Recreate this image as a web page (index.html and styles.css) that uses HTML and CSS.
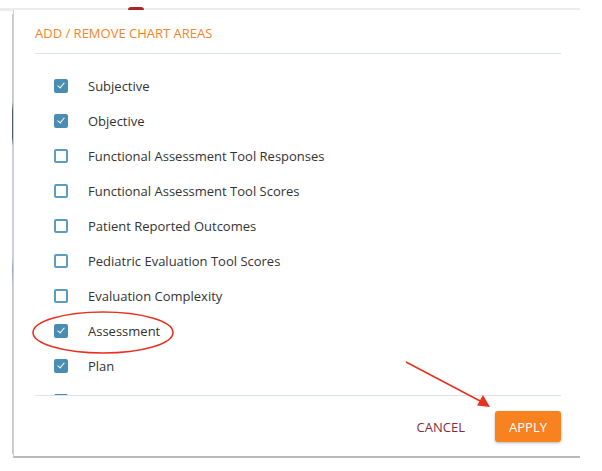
FILE: index.html
```html
<!DOCTYPE html>
<html>
<head>
<meta charset="utf-8">
<link rel="stylesheet" href="styles.css">
</head>
<body>
<div class="page">
  <div class="backdrop-top"><span class="red-tab"></span></div>
  <div class="backdrop-left"></div>
  <div class="modal">
    <div class="modal-header">
      <h2 class="title">ADD / REMOVE CHART AREAS</h2>
    </div>
    <div class="list">
      <label class="row"><span class="cb checked"></span><span class="lbl">Subjective</span></label>
      <label class="row"><span class="cb checked"></span><span class="lbl">Objective</span></label>
      <label class="row"><span class="cb"></span><span class="lbl">Functional Assessment Tool Responses</span></label>
      <label class="row"><span class="cb"></span><span class="lbl">Functional Assessment Tool Scores</span></label>
      <label class="row"><span class="cb"></span><span class="lbl">Patient Reported Outcomes</span></label>
      <label class="row"><span class="cb"></span><span class="lbl">Pediatric Evaluation Tool Scores</span></label>
      <label class="row"><span class="cb"></span><span class="lbl">Evaluation Complexity</span></label>
      <label class="row"><span class="cb checked"></span><span class="lbl">Assessment</span></label>
      <label class="row"><span class="cb checked"></span><span class="lbl">Plan</span></label>
      <label class="row"><span class="cb checked"></span><span class="lbl">Procedures</span></label>
    </div>
    <div class="modal-footer">
      <button class="btn-cancel">CANCEL</button>
      <button class="btn-apply">APPLY</button>
    </div>
  </div>
  <svg class="annot" width="602" height="471" viewBox="0 0 602 471">
    <ellipse cx="103" cy="332.5" rx="70" ry="20.5" fill="none" stroke="#e8321f" stroke-width="1.6"/>
    <line x1="406" y1="362" x2="482" y2="402" stroke="#e8321f" stroke-width="1.6"/>
    <polygon points="490,407 477,405.5 483,395" fill="#e8321f"/>
  </svg>
</div>
</body>
</html>
```
FILE: styles.css
```css
html, body {
  margin: 0;
  padding: 0;
  background: #ffffff;
}
.page {
  position: relative;
  width: 602px;
  height: 471px;
  overflow: hidden;
  font-family: "Open Sans", "DejaVu Sans", sans-serif;
  padding-top: 8px;
  box-sizing: border-box;
}
.backdrop-top {
  position: absolute;
  left: 0;
  top: 8px;
  width: 580px;
  height: 3px;
  background: #ececec;
}
.red-tab {
  position: absolute;
  left: 128px;
  top: -1px;
  width: 16px;
  height: 3px;
  border-radius: 3px 3px 0 0;
  background: #a8262b;
}
.backdrop-left {
  position: absolute;
  left: 12px;
  top: 14px;
  width: 2px;
  height: 440px;
  background: linear-gradient(#c9c9c9, #c9c9c9 20%, #4a5a6e 22%, #4a5a6e 28%, #cfd3da 30%, #cfd3da 55%, #98a6c4 58%, #c9c9c9 62%);
}
.modal {
  position: relative;
  margin-left: 13px;
  margin-top: 2px;
  width: 567px;
  height: 448px;
  background: #ffffff;
  border-left: 1px solid #d0d0d0;
  border-bottom: 2px solid #b8b8b8;
  box-sizing: border-box;
  padding: 0 19px 0 21px;
  display: flex;
  flex-direction: column;
}
.modal-header {
  height: 44px;
  border-bottom: 1px solid #dce3e8;
  display: flex;
  align-items: center;
  box-sizing: border-box;
  padding-top: 2px;
}
.title {
  margin: 0;
  font-size: 13px;
  font-weight: 400;
  color: #f5832a;
  letter-spacing: 0;
}
.list {
  height: 342px;
  overflow: hidden;
  padding-top: 14px;
  box-sizing: border-box;
  border-bottom: 1px solid #dce3e8;
  display: flex;
  flex-direction: column;
}
.row {
  height: 35px;
  flex: none;
  display: flex;
  align-items: center;
  padding-left: 19px;
}
.cb {
  width: 14px;
  height: 14px;
  box-sizing: border-box;
  border: 2px solid #5b9cc0;
  border-radius: 2px;
  margin-right: 20px;
  position: relative;
  flex: none;
}
.cb.checked {
  background: #4a8db3;
  border-color: #4a8db3;
}
.cb.checked::after {
  content: "";
  position: absolute;
  left: 3px;
  top: 0px;
  width: 3px;
  height: 6px;
  border-right: 1.2px solid #ffffff;
  border-bottom: 1.2px solid #ffffff;
  transform: rotate(40deg);
}
.lbl {
  font-size: 13px;
  color: #333333;
}
.modal-footer {
  flex: 1;
  display: flex;
  align-items: center;
  justify-content: flex-end;
  padding-top: 1px;
}
.btn-cancel {
  border: none;
  background: none;
  font-family: inherit;
  font-size: 13px;
  color: #8a2a3c;
  padding: 0;
  margin-right: 30px;
}
.btn-apply {
  border: none;
  background: #f7821f;
  color: #ffffff;
  font-family: inherit;
  font-size: 13px;
  width: 66px;
  height: 31px;
  border-radius: 3px;
  box-shadow: 0 1px 3px rgba(0,0,0,0.3);
  padding: 0;
}
.annot {
  position: absolute;
  left: 0;
  top: 0;
  pointer-events: none;
}
```
